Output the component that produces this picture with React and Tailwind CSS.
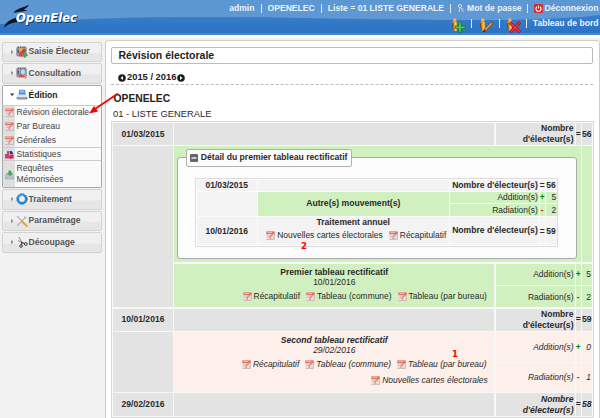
import React from "react";

function Pdf({ className = "" }) {
  return (
    <svg className={"shrink-0 " + className} width="9" height="9" viewBox="0 0 9 9">
      <rect x="0.2" y="0.4" width="8.5" height="8.4" rx="0.6" fill="#e3dedd" />
      <path d="M0.5 8.5H8.4V3" stroke="#c6b4b0" strokeWidth="0.8" fill="none" />
      <path d="M0.3 0.4H8.7V3.2H0.3Z" fill="#e37361" />
      <path d="M1.4 1.5h4.6" stroke="#f6c9be" strokeWidth="0.8" />
      <path d="M6.6 2.8C6.6 4.6 5 4.6 4.2 5.2V7.8" stroke="#e08475" strokeWidth="1.3" fill="none" />
      <path d="M1.4 5.2H3.2" stroke="#e6a79c" strokeWidth="1" />
    </svg>
  );
}

function PersonIcon({ kind }) {
  return (
    <svg className="shrink-0" width="15" height="15" viewBox="0 0 15 15">
      <path d="M1.2 5.5C1.2 3.8 2.2 3.4 3.6 3.6L5.8 3.8V13L2.6 12.5V9.5L1.2 8.5Z" fill="#f29a1d" />
      <path d="M0.8 5.5L2.4 4.6V12.7L1.2 9Z" fill="#555046" />
      <circle cx="3.8" cy="2.1" r="1.8" fill="#f6b04c" />
      <path d="M4.8 4V13" stroke="#ffd98d" strokeWidth="1" />
      {kind === "add" && (
        <>
          <path d="M9 4.2V14.4M3.8 9.3H14.4" stroke="#12721f" strokeWidth="3" />
          <path d="M9 4.8V13.8M4.4 9.3H13.8" stroke="#43d64b" strokeWidth="1.7" />
        </>
      )}
      {kind === "edit" && (
        <>
          <path d="M5.2 13L13.6 4.6" stroke="#8e4a18" strokeWidth="2.8" />
          <path d="M6.2 11.8L12.8 5.2" stroke="#f09b45" strokeWidth="1.6" />
          <path d="M4.2 14L6 12.2" stroke="#332a25" strokeWidth="1.4" />
        </>
      )}
      {kind === "del" && (
        <>
          <path d="M4 4.6L14 14.2M14 4.2L4.4 14.4" stroke="#a31219" strokeWidth="3.2" />
          <path d="M4.4 5L13.6 13.8M13.6 4.7L4.9 13.9" stroke="#f42c38" strokeWidth="1.9" />
        </>
      )}
    </svg>
  );
}

function MenuIcon({ kind }) {
  return (
    <svg className="shrink-0" width="12" height="12" viewBox="0 0 12 12">
      {(kind === "saisie" || kind === "consult") && (
        <>
          <rect x="0.8" y="1.2" width="9.4" height="8.6" rx="0.8" fill="#a9a5a8" stroke="#6f6b70" strokeWidth="0.7" />
          <path d="M2.3 0.4V2.4M4.6 0.4V2.4M6.9 0.4V2.4M9 0.4V2.4" stroke="#5c5860" strokeWidth="0.8" />
          <path d="M1.4 3.6L3 3.4V7.6L1.4 7Z" fill="#58607e" />
        </>
      )}
      {kind === "saisie" && (
        <>
          <circle cx="5.4" cy="3.8" r="1.9" fill="#f0b23d" />
          <path d="M2.8 10.4C2.8 6.6 4.3 5 6.4 5S9.8 7 9.6 10.4Z" fill="#e04058" />
          <circle cx="8" cy="4.8" r="1.8" fill="#d8303a" />
          <path d="M8.9 6.6V11.8M6.4 9.2H11.8" stroke="#3fb04a" strokeWidth="2" />
        </>
      )}
      {kind === "consult" && (
        <>
          <path d="M2.8 10.2C2.8 6.8 4.4 5.4 6 5.4S8.4 7 8.6 10.2Z" fill="#e04a50" />
          <ellipse cx="7" cy="4.9" rx="2.6" ry="3.2" fill="#b8dcf2" stroke="#6f8fb0" strokeWidth="0.9" />
          <path d="M8.4 7.8L10 11.4" stroke="#e09428" strokeWidth="1.8" />
        </>
      )}
      {kind === "print" && (
        <>
          <path d="M3.2 0.8H9L9.8 6H2.4Z" fill="#4a92dc" />
          <path d="M4.2 1.4H8L8.4 3.6H3.8Z" fill="#8dc2f2" />
          <path d="M0.8 6.2L2.6 5.4H9.8L11.2 6.2V8.6H0.8Z" fill="#e1e5e9" />
          <path d="M0.6 7.9H11.4V9.6L10.4 10.6H1.6L0.6 9.6Z" fill="#858c97" />
          <path d="M2 8.8H10" stroke="#c7cdd6" strokeWidth="0.7" />
        </>
      )}
      {kind === "gear" && (
        <>
          <circle cx="6" cy="6" r="4.1" fill="none" stroke="#2184d4" strokeWidth="2.3" />
          <circle cx="6" cy="6" r="5.3" fill="none" stroke="#2184d4" strokeWidth="1" strokeDasharray="1.7 1.1" />
          <path d="M2.6 4.8C3.4 3 5.4 2.2 7.2 2.6" stroke="#7ec4f4" strokeWidth="1" fill="none" />
        </>
      )}
      {kind === "tools" && (
        <>
          <path d="M1.2 11L9.4 2.4" stroke="#b3b3b3" strokeWidth="1.3" />
          <path d="M8.4 3.4L8.6 1.2M9 3.2L11.2 2.8" stroke="#b3b3b3" strokeWidth="0.9" />
          <path d="M1 0.8L6 6.2" stroke="#a9a9a9" strokeWidth="1.1" />
          <path d="M5.8 6.2L10.8 11" stroke="#e9a33b" strokeWidth="2" strokeLinecap="round" />
        </>
      )}
      {kind === "cut" && (
        <>
          <path d="M3 1L5.8 6.6M2 4.6L7.4 7.2" stroke="#8a8a8a" strokeWidth="1" />
          <circle cx="9.8" cy="8" r="1.4" fill="none" stroke="#3c3c3c" strokeWidth="1" />
          <circle cx="5" cy="10" r="1.3" fill="none" stroke="#3c3c3c" strokeWidth="1" />
          <path d="M5.4 5.8L5.8 8.8M6 6.4L8.6 7.6" stroke="#3c3c3c" strokeWidth="1.1" />
        </>
      )}
    </svg>
  );
}

function MenuHead({ kind, label, open }) {
  return (
    <div
      className={
        open
          ? "flex h-[21px] items-center rounded-t-[2px] border border-[#aaaaaa] border-b-[#cccccc] bg-white pl-[6px] text-[#212121]"
          : "flex h-[20.5px] items-center rounded-[2px] border border-[#d3d3d3] bg-linear-to-b from-[#f0f0f0] from-50% to-[#e6e6e6] to-60% pl-[6px] text-[#555555]"
      }
    >
      <svg className="shrink-0" width="7" height="6" viewBox="0 0 7 6">
        {open ? <path d="M1 1.5H5.4L3.2 4Z" fill="#333" /> : <path d="M2.2 0.8L4.4 3L2.2 5.2Z" fill="#888" />}
      </svg>
      <MenuIcon kind={kind} />
      <span className="ml-[0.5px] text-[8.6px] leading-none font-bold whitespace-nowrap">{label}</span>
    </div>
  );
}

function SubItem({ icon, children, className }) {
  return (
    <div className={"flex " + className}>
      <div className="flex w-[12px] shrink-0 items-center justify-center bg-[#dfdfdf]">{icon}</div>
      <div className="flex items-center pl-[1.5px] text-[8.6px] leading-[11px] whitespace-nowrap text-[#444444]">{children}</div>
    </div>
  );
}

function Link({ children }) {
  return (
    <span className="flex items-center gap-[2px] whitespace-nowrap">
      <Pdf />
      <span>{children}</span>
    </span>
  );
}

function Count({ value, italic }) {
  return (
    <>
      <div className={"flex items-center justify-end bg-[#e3e3e3] pr-[1px] text-right text-[8.6px] leading-[10.7px] font-bold" + (italic ? " italic" : "")}>
        <span>
          Nombre
          <br />
          d'électeur(s)
        </span>
      </div>
      <div className="flex items-center justify-center bg-[#e3e3e3] text-[8.6px] font-bold">=</div>
      <div className={"flex items-center justify-end bg-[#e3e3e3] text-[8.6px] font-bold" + (italic ? " italic" : "")}>{value}</div>
    </>
  );
}

function Change({ label, sign, value, tone }) {
  const bg = tone === "green" ? "bg-[#d0f0c0]" : "bg-[#fdefea]";
  const slant = tone === "green" ? "" : " italic";
  const color = sign === "+" ? "text-[#008a00]" : "text-[#f00000]";
  return (
    <>
      <div className={"flex items-center justify-end pr-[1px] whitespace-nowrap " + bg + slant}>{label}</div>
      <div className={"flex items-center justify-center font-bold " + bg + " " + color}>{sign}</div>
      <div className={"flex items-center justify-end pr-[0.5px] " + bg + slant}>{value}</div>
    </>
  );
}

function InnerTable() {
  return (
    <div className="grid h-[69px] w-[363px] grid-cols-[60px_191px_89px_5px_11px] grid-rows-[11px_11.5px_11.5px_28px] gap-[1px] border border-[#dcdcdc] bg-[#fcfcfc] p-[1px] text-[8.45px] leading-none">
      <div className="flex items-center justify-center bg-[#f3f3f3] text-[8.5px] font-bold">01/03/2015</div>
      <div className="bg-[#f3f3f3]" />
      <div className="flex items-center justify-end bg-[#f3f3f3] pr-[1px] text-[8.6px] font-bold whitespace-nowrap">Nombre d'électeur(s)</div>
      <div className="flex items-center justify-center bg-[#f3f3f3] font-bold">=</div>
      <div className="flex items-center justify-end bg-[#f3f3f3] pr-[1px] font-bold">56</div>
      <div className="row-span-2 bg-[#f3f3f3]" />
      <div className="row-span-2 flex items-center justify-center bg-[#d0f0c0] text-[8.6px] font-bold">Autre(s) mouvement(s)</div>
      <Change label="Addition(s)" sign="+" value="5" tone="green" />
      <Change label="Radiation(s)" sign="-" value="2" tone="green" />
      <div className="flex items-center justify-center bg-[#f3f3f3] text-[8.5px] font-bold">10/01/2016</div>
      <div className="flex flex-col items-center bg-[#f3f3f3]">
        <span className="text-[8.6px] leading-[11px] font-bold">Traitement annuel</span>
        <div className="mt-[3px] flex gap-[6px] pl-[6px]">
          <Link>Nouvelles cartes électorales</Link>
          <Link>Récapitulatif</Link>
        </div>
      </div>
      <div className="flex items-center justify-end bg-[#f3f3f3] pr-[1px] text-[8.6px] font-bold whitespace-nowrap">Nombre d'électeur(s)</div>
      <div className="flex items-center justify-center bg-[#f3f3f3] font-bold">=</div>
      <div className="flex items-center justify-end bg-[#f3f3f3] pr-[1px] font-bold">59</div>
    </div>
  );
}

function Bar() {
  return <span className="h-[9px] w-px bg-[#dce9f7]" />;
}

function YearArrow({ flip }) {
  return (
    <svg width="8" height="8" viewBox="0 0 8 8" className={flip ? "shrink-0 rotate-180" : "shrink-0"}>
      <circle cx="4" cy="4" r="3.8" fill="#1d1d1d" />
      <path d="M5 1.9V6.1L2.5 4Z" fill="#fff" />
    </svg>
  );
}

function Header() {
  return (
    <header className="relative h-[35px] bg-linear-to-b from-[#4285cd] to-[#2a72c4] text-[8.6px] font-bold text-[#e9f2fc]">
      <svg className="absolute top-0 left-0" width="600" height="35">
        <defs>
          <linearGradient id="sky" x1="0" y1="0" x2="0" y2="1">
            <stop offset="0" stopColor="#5b97d3" />
            <stop offset="1" stopColor="#6299d3" />
          </linearGradient>
        </defs>
        <path d="M0 0H600V15C570 19 520 20 460 20C360 20 290 17 200 17C110 17 60 20 0 24Z" fill="url(#sky)" />
        <path d="M0 34H600" stroke="#5c9ade" strokeWidth="1" />
      </svg>
      <div className="relative flex justify-between">
        <svg width="90" height="34" viewBox="0 0 90 34">
          <path d="M13.5 13C16 8.5 23 8 29 4.8C27.5 7.4 25.5 8.6 23.5 9.6L27.5 10.4C22 11.6 18 11.4 13.5 13Z" fill="#0a1420" />
          <path d="M4 28C5.5 21.5 10.5 20 16 17.5L17.5 22.5C12 22.5 8 24 4 28Z" fill="#0a1420" />
          <text x="17" y="22.9" fontFamily="DejaVu Sans Condensed, DejaVu Sans, sans-serif" fontWeight="bold" fontStyle="italic" fontSize="13" textLength="61" lengthAdjust="spacingAndGlyphs" fill="#173a66">OpenElec</text>
          <text x="16" y="21.9" fontFamily="DejaVu Sans Condensed, DejaVu Sans, sans-serif" fontWeight="bold" fontStyle="italic" fontSize="13" textLength="61" lengthAdjust="spacingAndGlyphs" fill="#ffffff">OpenElec</text>
        </svg>
        <div className="flex flex-col items-end pr-[1.5px]">
          <div className="mt-[2px] flex h-[12px] items-center whitespace-nowrap">
            <span>admin</span>
            <span className="w-[6px]" /><Bar /><span className="w-[6px]" />
            <span>OPENELEC</span>
            <span className="w-[6px]" /><Bar /><span className="w-[6px]" />
            <span>Liste = 01 LISTE GENERALE</span>
            <span className="w-[5.5px]" /><Bar /><span className="w-[6.5px]" />
            <svg width="8" height="9" viewBox="0 0 8 9">
              <circle cx="3" cy="2" r="1.6" fill="none" stroke="#d5dbe2" strokeWidth="1" />
              <path d="M3 3.4L2 8M3.6 3.4L6.4 7.8M1.8 6.4H3M5 5.6L6.4 4.6" stroke="#bfc9d4" strokeWidth="1.1" fill="none" />
            </svg>
            <span className="ml-[2px]">Mot de passe</span>
            <span className="w-[5.5px]" /><Bar /><span className="w-[5.5px]" />
            <svg width="9" height="9" viewBox="0 0 9 9">
              <rect width="9" height="9" rx="1.4" fill="#dc2530" />
              <path d="M2.9 2.7A2.6 2.6 0 1 0 6.1 2.7M4.5 1.5V4.4" stroke="#fff" strokeWidth="1.1" fill="none" />
            </svg>
            <span className="ml-[2px]">Déconnexion</span>
          </div>
          <div className="mt-[2px] flex h-[17px] items-start whitespace-nowrap">
            <div className="mt-[1.5px]"><PersonIcon kind="add" /></div>
            <span className="w-[5.5px]" /><span className="mt-[3px] flex"><Bar /></span><span className="w-[6.5px]" />
            <div className="mt-[1.5px]"><PersonIcon kind="edit" /></div>
            <span className="w-[5px]" /><span className="mt-[3px] flex"><Bar /></span><span className="w-[6px]" />
            <div className="mt-[1.5px]"><PersonIcon kind="del" /></div>
            <span className="w-[5.5px]" /><span className="mt-[3px] flex"><Bar /></span><span className="w-[5.5px]" />
            <span className="mt-[1px] leading-[12px]">Tableau de bord</span>
          </div>
        </div>
      </div>
    </header>
  );
}

function Sidebar() {
  return (
    <nav className="flex w-[102px] shrink-0 flex-col gap-[1px] pt-[1.5px] pl-[2px]">
      <MenuHead kind="saisie" label="Saisie Électeur" />
      <MenuHead kind="consult" label="Consultation" />
      <div>
        <MenuHead kind="print" label="Édition" open />
        <div className="h-[82.5px] overflow-hidden rounded-b-[2px] border border-t-0 border-[#aaaaaa] bg-[#fafafa]">
          <SubItem className="h-[14px]" icon={<Pdf />}>Révision électorale</SubItem>
          <SubItem className="h-[13.5px]" icon={<Pdf />}>Par Bureau</SubItem>
          <SubItem className="h-[14px]" icon={<Pdf />}>Générales</SubItem>
          <SubItem
            className="h-[14px] border-y border-[#cccccc]"
            icon={
              <svg width="9" height="9" viewBox="0 0 9 9">
                <path d="M1 4V8.6M3 1V8.6" stroke="#c31d55" strokeWidth="1.6" />
                <path d="M4.6 0.8V4H8.2A3.6 3.6 0 0 0 4.6 0.8Z" fill="#2c3c9c" />
                <path d="M4.4 4.4H8.6V8.6H4.4Z" fill="#d7274c" />
                <path d="M4.4 6L6.4 8.6H4.4Z" fill="#3b47a8" />
              </svg>
            }
          >
            Statistiques
          </SubItem>
          <SubItem
            className="h-[26.5px]"
            icon={
              <svg width="9" height="11" viewBox="0 0 9 11">
                <path d="M1.4 4.6H7.6L8.5 7.6V10H0.5V7.6Z" fill="#b4c3cc" stroke="#8096a4" strokeWidth="0.5" />
                <path d="M3.4 1.6L6.2 1.8V3.8H8L5.2 7L2 4.6L3.6 4Z" fill="#31ae48" />
              </svg>
            }
          >
            <span>
              Requêtes
              <br />
              Mémorisées
            </span>
          </SubItem>
        </div>
      </div>
      <MenuHead kind="gear" label="Traitement" />
      <MenuHead kind="tools" label="Paramétrage" />
      <MenuHead kind="cut" label="Découpage" />
    </nav>
  );
}

function MainTable() {
  return (
    <div className="grid w-[482.5px] grid-cols-[60px_320px_79px_5px_9.5px] grid-rows-[22px_116px_21.5px_21px_22px_30px_29px_22.5px] gap-[1.25px] border border-[#d8d8d8] bg-[#f8f8f8] p-[1px] text-[8.45px] leading-none">
      <div className="flex items-center justify-center bg-[#e3e3e3] text-[8.55px] font-bold">01/03/2015</div>
      <div className="bg-[#e3e3e3]" />
      <Count value="56" />

      <div className="row-span-3 bg-[#e3e3e3]" />
      <div className="col-span-3 bg-[#d0f0c0] pt-[2px] pr-[4px] pl-[3px]">
        <div className="mt-[9px] h-[101.5px] rounded-[3px] border border-[#aaaaaa] bg-[#fcfcfc] pl-[16.5px]">
          <div className="-mt-[9.5px] -ml-[9px] flex h-[18px] w-[166px] items-center rounded-[2px] border border-[#b0b0b0] bg-[#fcfcfc] pl-[3px] text-[8.64px] font-bold whitespace-nowrap">
            <svg className="mr-[3px] shrink-0" width="8" height="8" viewBox="0 0 8 8">
              <rect width="8" height="8" rx="1" fill="#666" />
              <path d="M1.5 4H6.5" stroke="#fff" strokeWidth="1.3" />
            </svg>
            Détail du premier tableau rectificatif
          </div>
          <div className="mt-[11px]">
            <InnerTable />
          </div>
        </div>
      </div>
      <div className="bg-[#d0f0c0]" />

      <div className="row-span-2 flex flex-col items-center bg-[#d0f0c0] pt-[3px]">
        <span className="text-[8.6px] leading-[10.5px] font-bold">Premier tableau rectificatif</span>
        <span className="leading-[11px]">10/01/2016</span>
        <div className="mt-[3.5px] flex gap-[6px] pl-[61px]">
          <Link>Récapitulatif</Link>
          <Link>Tableau (commune)</Link>
          <Link>Tableau (par bureau)</Link>
        </div>
      </div>
      <Change label="Addition(s)" sign="+" value="5" tone="green" />
      <Change label="Radiation(s)" sign="-" value="2" tone="green" />

      <div className="flex items-center justify-center bg-[#e3e3e3] text-[8.55px] font-bold">10/01/2016</div>
      <div className="bg-[#e3e3e3]" />
      <Count value="59" />

      <div className="row-span-2 bg-[#e3e3e3]" />
      <div className="row-span-2 flex flex-col items-center bg-[#fdefea] pt-[3px] italic">
        <span className="text-[8.6px] leading-[10.5px] font-bold">Second tableau rectificatif</span>
        <span className="leading-[11.5px]">29/02/2016</span>
        <div className="mt-[3px] flex gap-[6px] pl-[60px]">
          <Link>Récapitulatif</Link>
          <Link>Tableau (commune)</Link>
          <Link>Tableau (par bureau)</Link>
        </div>
        <div className="mt-[7px] mr-[6.5px] self-end">
          <Link>Nouvelles cartes électorales</Link>
        </div>
      </div>
      <Change label="Addition(s)" sign="+" value="0" tone="pink" />
      <Change label="Radiation(s)" sign="-" value="1" tone="pink" />

      <div className="flex items-center justify-center bg-[#e3e3e3] text-[8.55px] font-bold">29/02/2016</div>
      <div className="bg-[#e3e3e3]" />
      <Count value="58" italic />
    </div>
  );
}

export default function App() {
  return (
    <div className="relative h-[418px] w-[600px] overflow-hidden bg-[#f2f2f2] font-['Liberation_Sans',Arial,sans-serif] text-[#2a2a2a]">
      <Header />
      <div className="h-[3px] bg-[#fafafa]" />
      <div className="flex pt-[2px]">
        <Sidebar />
        <main className="ml-[3px] h-[390px] w-[494.5px] shrink-0 rounded-t-[3px] border-[1.5px] border-[#cdcdcd] bg-white pl-[5px]">
          <div className="mt-[6px] flex h-[17px] w-[482px] items-center rounded-[2px] border border-[#bbbbbb] pl-[6.5px] text-[10.5px] leading-none font-bold text-[#222222]">
            Révision électorale
          </div>
          <div className="mt-[8px] flex h-[12px] items-center pl-[7px] text-[9.35px] leading-none font-bold text-[#222222]">
            <YearArrow />
            <span className="mx-[1px] whitespace-nowrap">2015 / 2016</span>
            <YearArrow flip />
          </div>
          <div className="mr-[5px] h-px w-[482px] border-b border-dashed border-[#bbbbbb]" />
          <div className="mt-[7px] pl-[2.5px] text-[10.3px] leading-[14px] font-bold text-[#222222]">OPENELEC</div>
          <div className="pl-[2px] text-[9.4px] leading-[15px]">01 - LISTE GENERALE</div>
          <MainTable />
        </main>
      </div>
      <svg className="absolute top-[90px] left-[86px]" width="36" height="28">
        <path d="M32 3.5L9 19" stroke="#f80000" strokeWidth="1.7" />
        <path d="M3 23.5L8 16L12 21.5Z" fill="#f80000" />
      </svg>
      <span className="absolute top-[242px] left-[301px] font-['DejaVu_Sans',sans-serif] text-[8.5px] leading-[9px] font-bold text-[#ff0000]">2</span>
      <span className="absolute top-[350px] left-[452px] font-['DejaVu_Sans',sans-serif] text-[8.5px] leading-[9px] font-bold text-[#ff0000]">1</span>
    </div>
  );
}
